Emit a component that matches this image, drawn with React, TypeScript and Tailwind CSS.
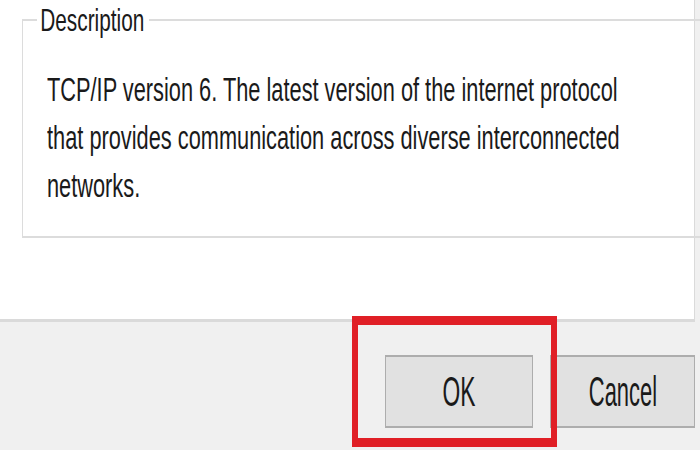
export default function App() {
  const lines = [
    'TCP/IP version 6. The latest version of the internet protocol',
    'that provides communication across diverse interconnected',
    'networks.',
  ];

  return (
    <div className="relative w-[700px] h-[450px] overflow-hidden bg-[#f0f0f0] text-[#1a1a1a] font-['Liberation_Sans',Arial,sans-serif]">
      {/* white property page */}
      <div className="w-[695px] h-[322px] bg-white border-r border-b-[3px] border-[#dadada] pl-[22px] pt-[2px]">
        <fieldset className="w-[649px] h-[236px] border-x border-y-2 border-[#dcdcdc] pl-[24px]">
          <legend className="-ml-[10px] w-[112px] h-[36px] text-[32px] leading-[36px] whitespace-nowrap">
            <span className="inline-block origin-left scale-x-[0.65] pl-[5px]">Description</span>
          </legend>
          <div className="pt-[28px] text-[33px] leading-[48px]">
            {lines.map((l) => (
              <div key={l} className="whitespace-nowrap">
                <span className="inline-block origin-left scale-x-[0.66]">{l}</span>
              </div>
            ))}
          </div>
        </fieldset>
      </div>

      {/* dialog buttons */}
      <div className="flex justify-end gap-[17px] pr-[5px] pt-[33px]">
        <button className="w-[148px] h-[73px] bg-[#e1e1e1] border-x border-y-2 border-[#adadad] text-[43px] leading-none">
          <span className="inline-block scale-x-[0.53]">OK</span>
        </button>
        <button className="w-[145px] h-[73px] bg-[#e1e1e1] border-x border-y-2 border-[#adadad] text-[43px] leading-none">
          <span className="inline-block scale-x-[0.51]">Cancel</span>
        </button>
      </div>

      {/* red highlight around OK */}
      <div className="absolute left-[352px] top-[316px] w-[205px] h-[131px] border-x-[6px] border-y-[9px] border-[#e01f26]" />
    </div>
  );
}
